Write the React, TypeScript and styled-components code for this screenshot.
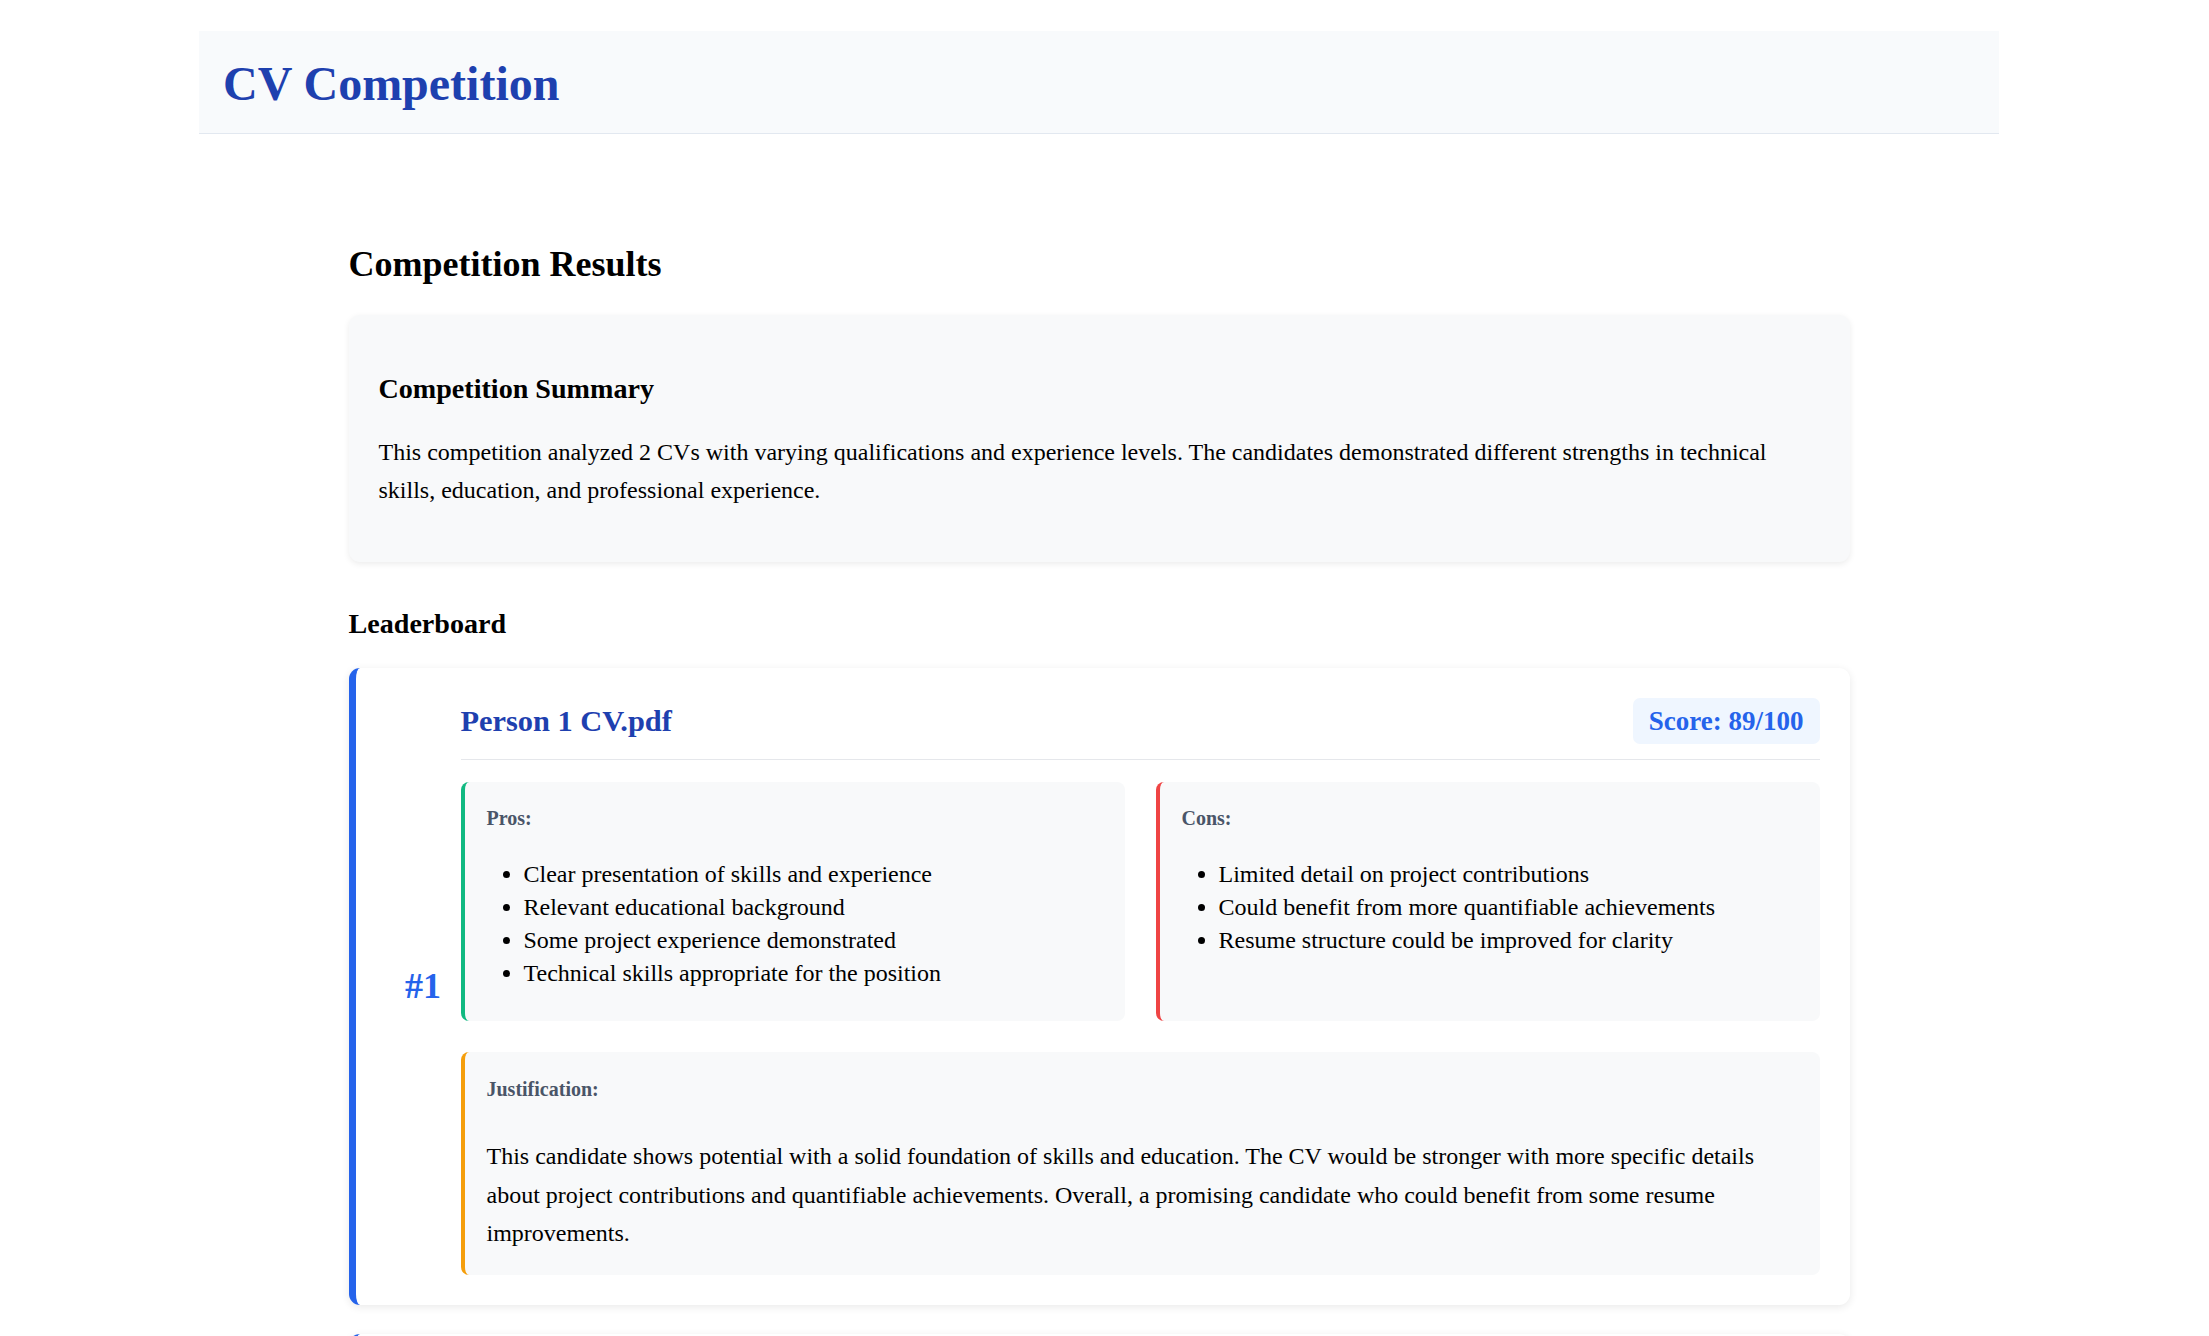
import React from "react";
import styled, { createGlobalStyle } from "styled-components";

const GlobalStyle = createGlobalStyle`
  html, body {
    margin: 0;
    padding: 0;
    background: #ffffff;
  }
  body {
    font-family: "Liberation Serif", "Times New Roman", serif;
    font-size: 24px;
    color: #000000;
  }
  * { box-sizing: border-box; }
`;

const Page = styled.div`
  width: 2198px;
  padding-top: 31px;
`;

const Header = styled.header`
  width: 1800px;
  margin: 0 auto;
  background: #f8fafc;
  border-bottom: 1px solid #e2e8f0;
  padding: 24.5px 24px 21.5px;
`;

const Title = styled.h1`
  margin: 0;
  font-size: 48px;
  line-height: 56px;
  font-weight: 700;
  color: #1e40af;
`;

const Main = styled.main`
  width: 1501px;
  margin: 0 auto;
  padding-top: 110px;
`;

const SectionTitle = styled.h2`
  margin: 0 0 29.6px;
  font-size: 36px;
  line-height: 41.4px;
  font-weight: 700;
`;

const SummaryCard = styled.section`
  background: #f8f9fa;
  border-radius: 11px;
  padding: 30px;
  box-shadow: 0 2px 6px rgba(0, 0, 0, 0.08);
  margin-bottom: 45.8px;
`;

const SubTitle = styled.h3<{ $mt: number; $mb: number }>`
  margin: ${(p) => p.$mt}px 0 ${(p) => p.$mb}px;
  font-size: 28.1px;
  line-height: 32.3px;
  font-weight: 700;
`;

const Paragraph = styled.p<{ $mt: number; $mb: number }>`
  margin: ${(p) => p.$mt}px 0 ${(p) => p.$mb}px;
  font-size: 24px;
  line-height: 38.4px;
`;

const RankCard = styled.article<{ $accent: string }>`
  display: flex;
  background: #ffffff;
  border-left: 7px solid ${(p) => p.$accent};
  border-radius: 11px;
  padding: 30px;
  box-shadow: 0 2px 8px rgba(0, 0, 0, 0.09);
  margin-bottom: 29px;
`;

const Rank = styled.div`
  flex: 0 0 75px;
  align-self: center;
  text-align: center;
  font-size: 36px;
  line-height: 41px;
  font-weight: 700;
  color: #2563eb;
`;

const CardBody = styled.div`
  flex: 1;
  min-width: 0;
`;

const NameRow = styled.div`
  display: flex;
  align-items: center;
  justify-content: space-between;
  padding-bottom: 15px;
  border-bottom: 1px solid #e5e7eb;
  margin-bottom: 22px;
`;

const FileName = styled.h3`
  margin: 0;
  font-size: 30.4px;
  line-height: 35px;
  font-weight: 700;
  color: #1e40af;
`;

const ScoreBadge = styled.span`
  background: #eff6ff;
  color: #2563eb;
  font-size: 27px;
  line-height: 31px;
  font-weight: 700;
  padding: 7.5px 16px;
  border-radius: 7px;
`;

const PanelGrid = styled.div`
  display: grid;
  grid-template-columns: 1fr 1fr;
  gap: 31px;
`;

const Panel = styled.div<{ $accent: string; $mt?: number; $pt?: number }>`
  background: #f8f9fa;
  border-left: 4px solid ${(p) => p.$accent};
  border-radius: 8px;
  padding: ${(p) => p.$pt ?? 24.4}px 22px 23px;
  margin-top: ${(p) => p.$mt ?? 0}px;
`;

const PanelLabel = styled.h4`
  margin: 0;
  font-size: 20px;
  line-height: 23px;
  font-weight: 700;
  color: #4a5568;
`;

const List = styled.ul`
  margin: 28.4px 0 8.2px;
  padding-left: 37px;
`;

const Item = styled.li`
  font-size: 24px;
  line-height: 33px;
`;

type Entry = {
  rank: number;
  file: string;
  score: number;
  pros: string[];
  cons: string[];
  justification: string;
};

const entries: Entry[] = [
  {
    rank: 1,
    file: "Person 1 CV.pdf",
    score: 89,
    pros: [
      "Clear presentation of skills and experience",
      "Relevant educational background",
      "Some project experience demonstrated",
      "Technical skills appropriate for the position",
    ],
    cons: [
      "Limited detail on project contributions",
      "Could benefit from more quantifiable achievements",
      "Resume structure could be improved for clarity",
    ],
    justification:
      "This candidate shows potential with a solid foundation of skills and education. The CV would be stronger with more specific details about project contributions and quantifiable achievements. Overall, a promising candidate who could benefit from some resume improvements.",
  },
  {
    rank: 2,
    file: "Person 2 CV.pdf",
    score: 82,
    pros: [
      "Good range of technical skills",
      "Relevant work experience",
      "Clear contact information",
    ],
    cons: [
      "Less detail on accomplishments",
      "Formatting could be more consistent",
    ],
    justification:
      "This candidate has a reasonable profile with relevant experience, but the CV would benefit from more detail on achievements and a more consistent structure.",
  },
];

const ResultCard: React.FC<{ entry: Entry }> = ({ entry }) => (
  <RankCard $accent="#2563eb">
    <Rank>#{entry.rank}</Rank>
    <CardBody>
      <NameRow>
        <FileName>{entry.file}</FileName>
        <ScoreBadge>Score: {entry.score}/100</ScoreBadge>
      </NameRow>
      <PanelGrid>
        <Panel $accent="#10b981">
          <PanelLabel>Pros:</PanelLabel>
          <List>
            {entry.pros.map((p) => (
              <Item key={p}>{p}</Item>
            ))}
          </List>
        </Panel>
        <Panel $accent="#ef4444">
          <PanelLabel>Cons:</PanelLabel>
          <List>
            {entry.cons.map((c) => (
              <Item key={c}>{c}</Item>
            ))}
          </List>
        </Panel>
      </PanelGrid>
      <Panel $accent="#f59e0b" $mt={31} $pt={25.8}>
        <PanelLabel>Justification:</PanelLabel>
        <Paragraph $mt={35.9} $mb={0}>
          {entry.justification}
        </Paragraph>
      </Panel>
    </CardBody>
  </RankCard>
);

export default function App() {
  return (
    <>
      <GlobalStyle />
      <Page>
        <Header>
          <Title>CV Competition</Title>
        </Header>
        <Main>
          <SectionTitle>Competition Results</SectionTitle>
          <SummaryCard>
            <SubTitle $mt={28.2} $mb={27.6}>
              Competition Summary
            </SubTitle>
            <Paragraph $mt={0} $mb={22.6}>
              This competition analyzed 2 CVs with varying qualifications and experience levels. The
              candidates demonstrated different strengths in technical skills, education, and
              professional experience.
            </Paragraph>
          </SummaryCard>
          <SubTitle $mt={0} $mb={27.9}>
            Leaderboard
          </SubTitle>
          {entries.map((e) => (
            <ResultCard key={e.file} entry={e} />
          ))}
        </Main>
      </Page>
    </>
  );
}
